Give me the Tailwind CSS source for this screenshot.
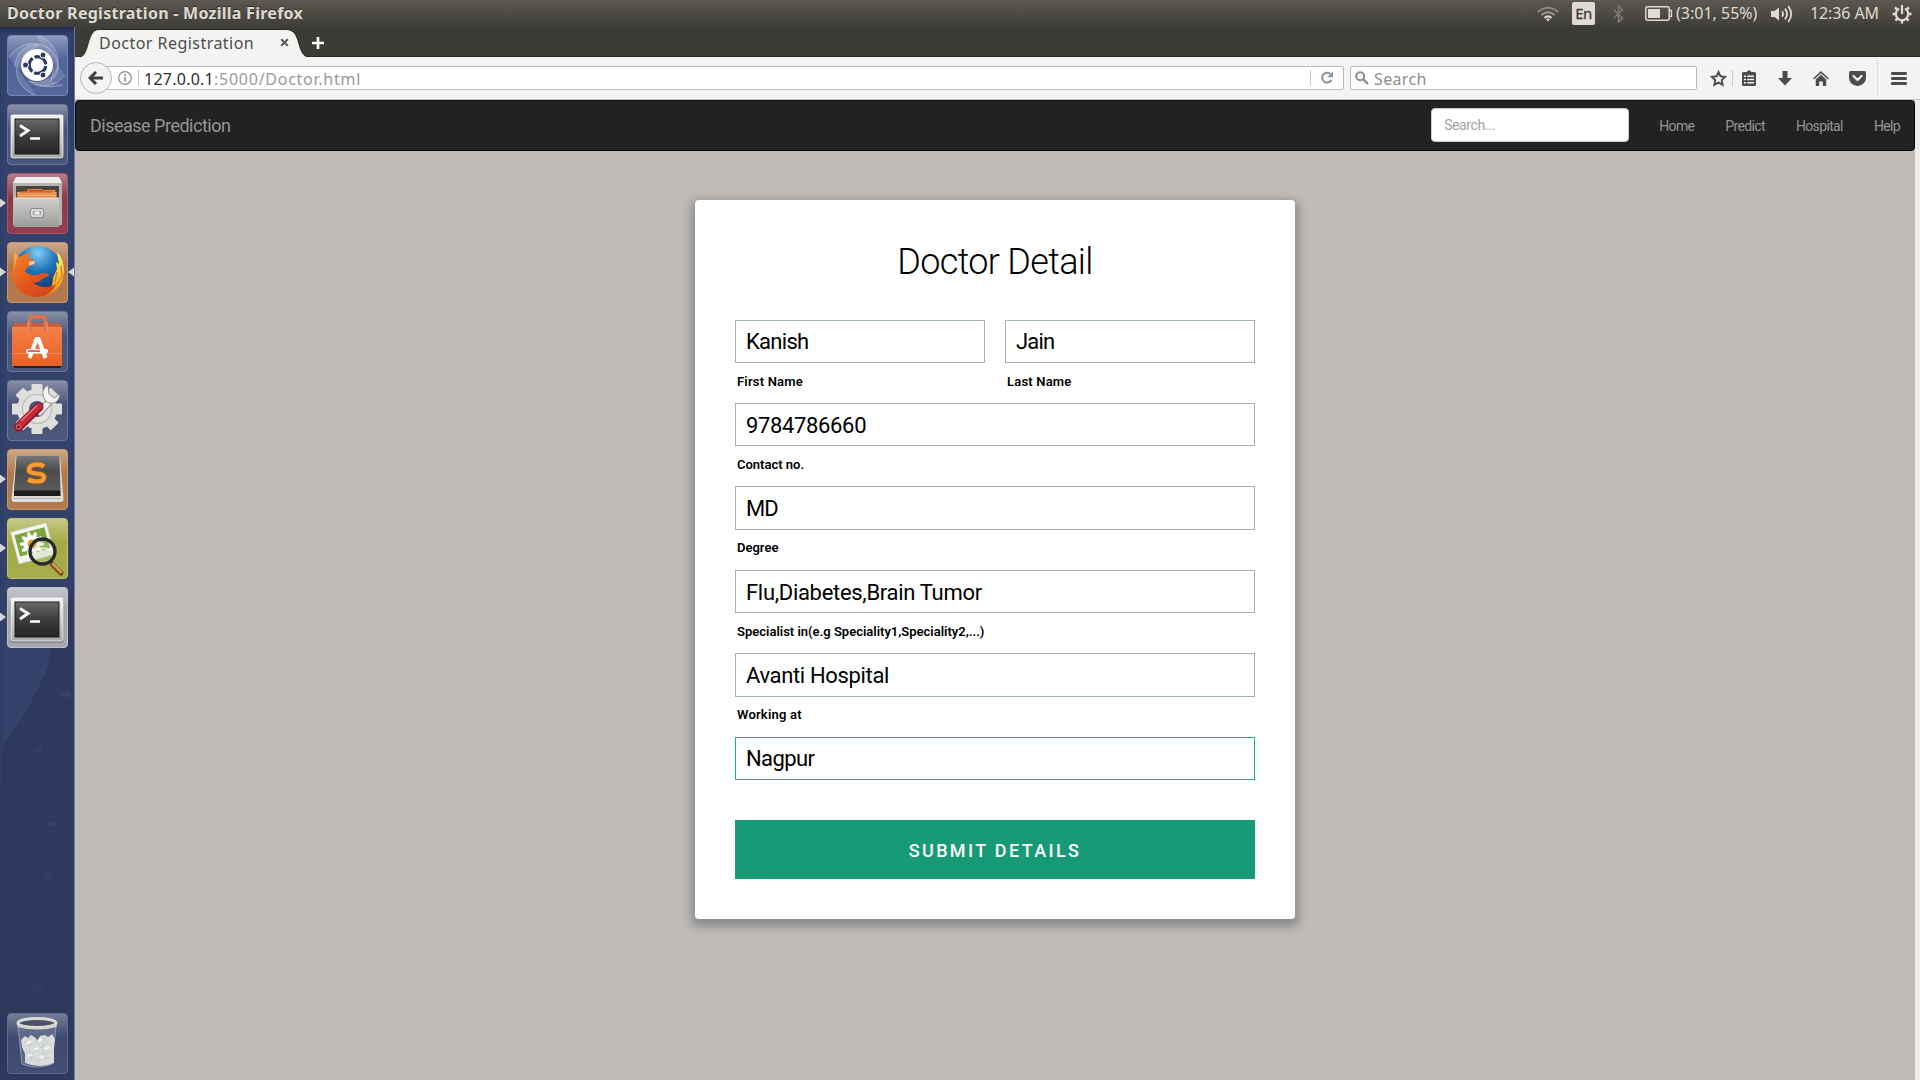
<!DOCTYPE html>
<html lang="en">
<head>
<meta charset="utf-8">
<title>Doctor Registration</title>
<script src="https://cdn.jsdelivr.net/npm/@tailwindcss/browser@4"></script>
</head>
<body class="w-[1920px] h-[1080px] overflow-hidden flex flex-col bg-[#c0bbb8] font-['Noto_Sans',sans-serif]">
<svg width="0" height="0" class="absolute">
  <defs>
    <linearGradient id="gloss" x1="0" y1="0" x2="0" y2="1"><stop offset="0" stop-color="#fff" stop-opacity=".4"/><stop offset=".4" stop-color="#fff" stop-opacity=".05"/><stop offset="1" stop-color="#fff" stop-opacity=".08"/></linearGradient>
    <linearGradient id="metal" x1="0" y1="0" x2="0" y2="1"><stop offset="0" stop-color="#f4f4f2"/><stop offset="1" stop-color="#a9a9a6"/></linearGradient>
    <linearGradient id="cabinet" x1="0" y1="0" x2="0" y2="1"><stop offset="0" stop-color="#cfcfcd"/><stop offset="1" stop-color="#9b9b99"/></linearGradient>
    <linearGradient id="screen" x1="0" y1="0" x2="0" y2="1"><stop offset="0" stop-color="#6a6a68"/><stop offset=".5" stop-color="#3c3c3b"/><stop offset="1" stop-color="#262625"/></linearGradient>
    <linearGradient id="key" x1="0" y1="0" x2="0" y2="1"><stop offset="0" stop-color="#77777a"/><stop offset=".4" stop-color="#4c4c4d"/><stop offset="1" stop-color="#5c5c5c"/></linearGradient>
    <linearGradient id="bag" x1="0" y1="0" x2="0" y2="1"><stop offset="0" stop-color="#f5814b"/><stop offset="1" stop-color="#ea6023"/></linearGradient>
    <radialGradient id="globe" cx=".5" cy=".15" r=".8"><stop offset="0" stop-color="#7fd0f2"/><stop offset=".45" stop-color="#2377bd"/><stop offset="1" stop-color="#0b2f6b"/></radialGradient>
    <linearGradient id="fox" x1="0" y1="0" x2="1" y2="1"><stop offset="0" stop-color="#f08a2c"/><stop offset=".5" stop-color="#e4571d"/><stop offset="1" stop-color="#d0401a"/></linearGradient>
    <linearGradient id="flame" x1="0" y1="0" x2="0" y2="1"><stop offset="0" stop-color="#fff27a"/><stop offset=".6" stop-color="#fbc52c"/><stop offset="1" stop-color="#ee7a1c"/></linearGradient>
    <symbol id="terminal" viewBox="0 0 61 61">
      <rect x="3.500" y="11.500" width="53" height="44" rx="2" fill="#000" opacity=".35"/>
      <rect x="4" y="11" width="52" height="43" rx="1.500" fill="url(#metal)" stroke="#f8f8f8" stroke-width=".8"/>
      <rect x="8" y="15" width="44" height="35" fill="url(#screen)" stroke="#1d1d1d"/>
      <path d="M13 21.500l8 5-8 5.500" fill="none" stroke="#fff" stroke-width="2.800"/>
      <path d="M23 34.500h10" stroke="#fff" stroke-width="2.600"/>
    </symbol>
  </defs>
</svg>

<!-- system panel -->
<header class="h-[27px] shrink-0 flex items-center justify-between pl-[7px] pr-2 bg-linear-to-b from-[#5c594e] to-[#3f3e39] text-[#dfdbd2]">
  <div class="pb-px text-base leading-[26px] font-bold tracking-[0.27px] whitespace-nowrap [text-shadow:0_-1px_0_#2b2a27]">Doctor Registration - Mozilla Firefox</div>
  <div class="flex items-center h-[27px] whitespace-nowrap">
    <svg class="w-[22px] h-4 mr-[13px]" viewBox="0 0 22 16" fill="none" stroke-width="2"><path d="M1 6Q11-2.500 21 6" stroke="#8d8a82"/><path d="M4.500 9Q11 3.500 17.500 9" stroke="#a09d95"/><path d="M7.500 12Q11 8.800 14.500 12" stroke="#dfdbd2"/><path d="M9 13.200L11 15.400 13 13.200Q11 11.800 9 13.200z" fill="#dfdbd2"/></svg>
    <div class="w-[23px] h-[23px] mr-[18px] rounded-[2px] bg-[#dfdbd2] text-[#3c3b37] text-[15px] leading-[23px] text-center tracking-[-0.5px] [-webkit-text-stroke:0.3px_#3c3b37]">En</div>
    <svg class="w-[11px] h-[18px] mr-[21px]" viewBox="0 0 11 18" fill="none" stroke="#7f7c75" stroke-width="1.500"><path d="M1 5l8.500 8-4 4V1l4 4L1 13"/></svg>
    <svg class="w-7 h-[15px] mr-[3px]" viewBox="0 0 28 15" fill="none"><rect x=".8" y=".8" width="23.400" height="13.400" rx="2" stroke="#dfdbd2" stroke-width="1.500"/><rect x="3" y="3" width="12" height="9" fill="#dfdbd2"/><path d="M25 4.500h1.500v6H25" stroke="#dfdbd2" stroke-width="1.300"/></svg>
    <div class="w-[95px] pb-px text-base leading-[26px]">(3:01, 55%)</div>
    <svg class="w-[22px] h-[18px] mr-[17px]" viewBox="0 0 22 18"><path d="M0 6h3.500L8 2.500v13L3.500 12H0z" fill="#dfdbd2"/><path d="M11 6.200q2.200 2.800 0 5.600M14 3.600q4 5.400 0 10.800M17.200 1q6 8 0 16" fill="none" stroke="#dfdbd2" stroke-width="1.800"/></svg>
    <div class="w-[82px] pb-px text-base leading-[26px] tracking-[-0.1px]">12:36 AM</div>
    <svg class="w-5 h-5" viewBox="0 0 20 20" fill="none" stroke="#dfdbd2"><path d="M7 4.600a6.200 6.200 0 1 0 6 0" stroke-width="2.200"/><path d="M10 1v9" stroke-width="2.200"/><path d="M10 16V19.500M.5 10h3.500M16 10h3.500M3 3.400l2.600 2.400M17 3.400l-2.600 2.400M3.400 16.600l2.400-2.400M16.600 16.600l-2.400-2.400" stroke-width="2.400"/></svg>
  </div>
</header>

<div class="flex flex-1 min-h-0">
  <!-- launcher -->
  <aside class="relative w-[75px] shrink-0 flex flex-col items-start gap-2 pt-2 pl-[7px] bg-[#32426b] border-r border-[#6e7ea3] shadow-[inset_0_6px_6px_-4px_#1b2340]">
    <svg class="absolute left-0 top-0 w-[74px] h-[1053px]" viewBox="0 0 74 1053" preserveAspectRatio="none"><path d="M74 560Q56 600 50 630C44 655 28 680 18 697 4 712 0 725 2 745L0 780V1053H74z" fill="#2f395e"/><g fill="#465579" opacity=".45"><ellipse cx="65" cy="667" rx="6" ry="3.500" opacity=".7"/><ellipse cx="42" cy="645" rx="6" ry="4" opacity=".4"/><ellipse cx="39" cy="722" rx="4" ry="4" opacity=".6"/><ellipse cx="51" cy="797" rx="5" ry="3" opacity=".6"/><ellipse cx="47" cy="849" rx="5" ry="4" opacity=".4"/><ellipse cx="38" cy="960" rx="6" ry="5" opacity=".3"/></g></svg>

    <div class="relative size-[61px] rounded-[4px] bg-[#475b95] border border-[#7485b4] overflow-hidden">
      <svg class="absolute -left-px -top-px size-[61px]" viewBox="0 0 61 61"><rect width="61" height="61" fill="url(#gloss)"/><g fill="#fff" fill-opacity=".13" stroke="#fff" stroke-opacity=".3" stroke-width="1"><path d="M2 22C14 4 40 4 49 22 54 32 50 42 43 46 52 30 38 14 26 16 14 18 8 30 10 40 12 52 22 58 30 61"/><path d="M28 0C42 3 52 14 51 30 49 44 32 50 22 46 34 56 50 50 58 40"/><path d="M8 32C8 18 20 8 32 10 22 14 14 22 16 34 18 46 34 56 56 50"/></g><circle cx="30" cy="31" r="16.500" fill="#000" opacity=".2"/><circle cx="30" cy="30" r="16" fill="#fff"/><circle cx="30.500" cy="30" r="8.300" fill="none" stroke="#2c3c66" stroke-width="3.200" stroke-dasharray="15.400 2" stroke-dashoffset="-1"/><g fill="#2c3c66" stroke="#fff" stroke-width="1"><circle cx="18.500" cy="30" r="3"/><circle cx="36" cy="20" r="3"/><circle cx="36" cy="40" r="3"/></g></svg>
    </div>
    <div class="relative size-[61px] rounded-[4px] bg-[#3d4a70] border border-[#68779d] overflow-hidden">
      <svg class="absolute -left-px -top-px size-[61px]" viewBox="0 0 61 61"><rect width="61" height="61" fill="url(#gloss)"/><use href="#terminal"/></svg>
    </div>
    <div class="relative size-[61px] rounded-[4px] bg-[#862f42] border border-[#a5566a] overflow-hidden">
      <svg class="absolute -left-px -top-px size-[61px]" viewBox="0 0 61 61"><rect width="61" height="61" fill="url(#gloss)"/><path d="M9 4h43l3 6v42H6V10z" fill="#b4b4b3"/><path d="M9 4h43l3 6H6z" fill="#ececea"/><rect x="9" y="13" width="43" height="14" fill="#4b4542"/><path d="M10 26V19l10-1 1-2h14l1 1h12l2 9z" fill="#e8843c"/><path d="M10 20h40M11 22.500h39" stroke="#f9c48a" stroke-width="1.200"/><path d="M22 17.500h14M13 19h33" stroke="#c44818" stroke-width="1"/><path d="M7 25h45v29H7z" fill="url(#cabinet)"/><path d="M7 25h45" stroke="#e4e4e4" stroke-width="1.200"/><rect x="23.500" y="35.500" width="13" height="9" rx="2.500" fill="#a8a8a8" stroke="#858585"/><rect x="24.800" y="36.800" width="10.400" height="6.400" rx="1.500" fill="none" stroke="#f5f5f5" stroke-width="1.300"/><rect x="27.500" y="38.500" width="5" height="3" fill="#eee"/></svg>
    </div>
    <div class="relative size-[61px] rounded-[4px] bg-[#ad6f41] border border-[#c79570] overflow-hidden">
      <svg class="absolute -left-px -top-px size-[61px]" viewBox="0 0 61 61"><rect width="61" height="61" fill="url(#gloss)"/><circle cx="31" cy="28" r="24" fill="url(#globe)"/><path d="M50 10C58 18 59 32 53 43 47 52 38 55 30 55 40 52 46 46 46 36L50 27 49 20 52 22z" fill="url(#flame)"/><path d="M54 24l1 10-5 9M50 30l-2 10" stroke="#e8781e" stroke-width="1.500" fill="none"/><path d="M8 10L11 15 17 13 24 10 22 16 28 19 28 22 22 24 18 29C20 32 26 34 31 33 34 31 38 30 42 33 40 36 36 35 34 38 31 41 28 41 26 40 30 45 40 47 49 42 46 50 39 55 30 55 16 55 5 45 5 30 5 24 8 21 7 16z" fill="url(#fox)"/><path d="M8 10L11 15C9 18 8 21 8 26 6 22 7 14 8 10z" fill="#f7a64a"/><path d="M22 19.500l6-.5-1 3-5 1.500z" fill="#f6d0b0"/></svg>
    </div>
    <div class="relative size-[61px] rounded-[4px] bg-[#3d4a70] border border-[#68779d] overflow-hidden">
      <svg class="absolute -left-px -top-px size-[61px]" viewBox="0 0 61 61"><rect width="61" height="61" fill="url(#gloss)"/><path d="M5 54h51l-3 3H8z" fill="#1a2038"/><path d="M5 16l3-4h44l3 4z" fill="#c65f3c"/><path d="M5 16h50v39H5z" fill="url(#bag)"/><path d="M22.500 20V9q0-3 3-3h10q3 0 3 3v11" fill="none" stroke="#dd7350" stroke-width="3.400"/><path d="M21 20V11M40 20V11" stroke="#f3a385" stroke-width=".8"/><path d="M5 42.500h50" stroke="#f08b56" stroke-width="1"/><path d="M22.500 47L29.500 28h2L38.500 47" fill="none" stroke="#fff" stroke-width="4"/><rect x="19" y="38" width="22" height="4.500" rx="2" fill="#fff"/><path d="M21 40.200h12" stroke="#e55" stroke-width="1.800"/></svg>
    </div>
    <div class="relative size-[61px] rounded-[4px] bg-[#3d4a70] border border-[#68779d] overflow-hidden">
      <svg class="absolute -left-px -top-px size-[61px]" viewBox="0 0 61 61"><rect width="61" height="61" fill="url(#gloss)"/><g transform="translate(30 29)"><g fill="#dededc"><rect x="-5.500" y="-25" width="11" height="50" rx="1"/><rect x="-5.500" y="-25" width="11" height="50" rx="1" transform="rotate(45)"/><rect x="-5.500" y="-25" width="11" height="50" rx="1" transform="rotate(90)"/><rect x="-5.500" y="-25" width="11" height="50" rx="1" transform="rotate(135)"/><circle r="20"/></g><circle r="14.500" fill="#e3e3e1" stroke="#bcbcbb" stroke-width="1.200"/><circle r="8" fill="#46537a"/></g><path d="M31 34L45 19" stroke="#8f8f8f" stroke-width="7"/><path d="M31 34L46 18" stroke="#f1f1f1" stroke-width="5"/><path d="M41 5c-6 3-7 12-1 17 5 3 12 1 13-8l-6 4-5-4z" fill="#f3f3f3" stroke="#8c8c8c" stroke-width="1"/><path d="M11.500 47L32 27" stroke="#8f1620" stroke-width="9" stroke-linecap="round"/><path d="M11.500 46.500L32 26.500" stroke="#c22a35" stroke-width="6.500" stroke-linecap="round"/><path d="M14 41L30 25.500" stroke="#ef7a7e" stroke-width="1.300"/><circle cx="11.500" cy="47" r="2" fill="#5a1118" stroke="#e99" stroke-width=".8"/></svg>
    </div>
    <div class="relative size-[61px] rounded-[4px] bg-[#ac713f] border border-[#c6956c] overflow-hidden">
      <svg class="absolute -left-px -top-px size-[61px]" viewBox="0 0 61 61"><rect width="61" height="61" fill="url(#gloss)"/><path d="M9 7h44l3.500 43q0 3-3 3H7.500q-3 0-3-3z" fill="#dcdcdb"/><path d="M9.500 7h43l1 33q0 3-3 3H10q-3 0-3-3z" fill="url(#key)"/><path d="M7 41.500h46.500v5.500H7z" fill="#1c1c1c"/><path d="M6.500 49.500h48" stroke="#8b8b8b" stroke-width="1" stroke-dasharray="1 1"/><path d="M37 17.500C33 14.500 23 14.500 22 20 21 27 37 22 37 28.500 36 34 26 33 21 30.500" fill="none" stroke="#c96a1b" stroke-width="6.500" opacity=".35"/><path d="M37 17.500C33 14.500 23 14.500 22 20 21 27 37 22 37 28.500 36 34 26 33 21 30.500" fill="none" stroke="#fb9a2e" stroke-width="4.200"/></svg>
    </div>
    <div class="relative size-[61px] rounded-[4px] bg-[#a0a63c] border border-[#bcc272] overflow-hidden">
      <svg class="absolute -left-px -top-px size-[61px]" viewBox="0 0 61 61"><rect width="61" height="61" fill="url(#gloss)"/><g transform="rotate(-15 25 25)"><rect x="7" y="9" width="37" height="33" fill="#f4f4f2" stroke="#c8c8c0" stroke-width=".6"/><rect x="10" y="13" width="31" height="22" fill="#7aa63c"/></g><g transform="translate(25 26)" fill="#fff"><ellipse rx="12.500" ry="3"/><ellipse rx="12.500" ry="3" transform="rotate(36)"/><ellipse rx="12.500" ry="3" transform="rotate(72)"/><ellipse rx="12.500" ry="3" transform="rotate(108)"/><ellipse rx="12.500" ry="3" transform="rotate(144)"/><circle r="4.500" fill="#ee9a1e"/></g><path d="M45 46l9 9" stroke="#6f4a1d" stroke-width="5" stroke-linecap="round"/><path d="M46 46l8 8" stroke="#d59a4e" stroke-width="2.500" stroke-linecap="round"/><circle cx="35.500" cy="33.500" r="12.500" fill="#b9cf98" fill-opacity=".35" stroke="#26282b" stroke-width="3.400"/><path d="M26 33q9-5 19-1" stroke="#fff" stroke-width="2" fill="none" opacity=".7"/></svg>
    </div>
    <div class="relative size-[61px] rounded-[4px] bg-[#9fa1a8] border border-[#c1c2c7] overflow-hidden">
      <svg class="absolute -left-px -top-px size-[61px]" viewBox="0 0 61 61"><rect width="61" height="61" fill="url(#gloss)"/><use href="#terminal"/></svg>
    </div>
    <div class="relative size-[61px] mt-auto mb-[6px] rounded-[4px] bg-[#36426a] border border-[#5c6a92] overflow-hidden">
      <svg class="absolute -left-px -top-px size-[61px]" viewBox="0 0 61 61"><rect width="61" height="61" fill="url(#gloss)" opacity=".8"/><path d="M11 13L15 51q15 6 30 0L49 13z" fill="#8b97b4" fill-opacity=".35" stroke="#aab3c8" stroke-width=".7"/><path d="M14 27l4-4 3 2 3-3 5 3 1 3 3-5 5-1 3 2 4-3 3 5-1 8 0 16q-14 6-29 0l0-9-3-7z" fill="#d9dcdb"/><path d="M17 28l6 5 6-4 5 6 6-5 5 3M17 38l7 3 6-4 6 5 7-4M19 47l6-3 6 4 6-4 6 2M24 24l-2 12 3 12M38 23l-3 12 4 12" stroke="#c5caca" stroke-width="1" fill="none"/><path d="M20 31l4-3M31 28l4-2M27 37l4-2M38 36l4-2M21 43l4-2M33 45l4-2" stroke="#f4f5f5" stroke-width="2.500"/><ellipse cx="30" cy="10" rx="19" ry="4.500" fill="#4a516a" stroke="#dcdcd6" stroke-width="3"/><path d="M10.500 11.500q19.500 6.500 39 0v2.500q-19.500 5-39 0z" fill="#d3d3cc"/></svg>
    </div>

    <!-- running / focused marks -->
    <svg class="absolute left-0 top-0 w-[74px] h-[700px]" viewBox="0 0 74 700" fill="#d8d8d8"><path d="M0 171.500l6 4.500-6 4.500zM0 240.500l6 4.500-6 4.500zM0 447.500l6 4.500-6 4.500zM0 516.500l6 4.500-6 4.500zM0 585.500l6 4.500-6 4.500zM74 240.500l-6 4.500 6 4.500z"/></svg>
  </aside>

  <main class="flex-1 flex flex-col min-w-0">
    <!-- tab strip -->
    <div class="relative h-[30px] shrink-0 bg-[#3c3b37] border-b border-[#2a2926]">
      <svg class="absolute left-0 top-0 w-[240px] h-[31px]" viewBox="0 0 240 31"><path d="M0 30.500H4C15 29.500 11 2.500 24 2.500H211C228 2.500 220 29.500 235 30.500V31H0z" fill="#f4f3f2" stroke="#2a2926" stroke-width="1"/><path d="M0 30h240v1H0z" fill="#f4f3f2"/></svg>
      <div class="relative flex items-center h-[31px] pl-[24px]">
        <span class="w-[181px] text-[16px] leading-[30px] tracking-[0.46px] text-[#4c4c4c] whitespace-nowrap">Doctor Registration</span>
        <svg class="size-[9px]" viewBox="0 0 9 9"><path d="M1.200 1.200l6.600 6.600M7.800 1.200L1.200 7.800" stroke="#5b5b5b" stroke-width="2.100"/></svg>
        <svg class="size-[14px] ml-[22px]" viewBox="0 0 14 14"><path d="M7 1v12M1 7h12" stroke="#fff" stroke-width="2.600"/></svg>
      </div>
    </div>

    <!-- navigation toolbar -->
    <div class="relative h-[43px] shrink-0 flex items-center bg-[#f4f3f2] border-b border-[#c5c3c0] pl-[5px] pb-px">
      <div class="relative z-10 size-8 rounded-full border border-[#b9b7b5] bg-[#f4f3f2] flex items-center justify-center">
        <svg class="w-[15px] h-[14px] mr-px" viewBox="0 0 15 14"><path d="M8 1L2 7l6 6M2.500 7H15" fill="none" stroke="#3f3f3f" stroke-width="3"/></svg>
      </div>
      <div class="-ml-[8px] w-[1240px] h-6 flex items-center bg-white border border-[#bdbbb8] rounded-r-[2px] pl-[13px]">
        <svg class="size-[14px]" viewBox="0 0 14 14" fill="none" stroke="#8c8c8c"><circle cx="7" cy="7" r="6.300" stroke-width="1.200"/><path d="M7 6.200v4.300M7 3.300v1.600" stroke-width="1.700"/></svg>
        <div class="w-px h-4 ml-[6px] bg-[#c9c9c9]"></div>
        <div class="ml-[5px] pt-[2px] text-base leading-[22px] whitespace-nowrap text-[#9a9a9a]"><span class="text-[#2e2e2e] tracking-[0.25px]">127.0.0.1</span><span class="tracking-[0.74px]">:5000/Doctor.html</span></div>
        <div class="w-px h-4 ml-auto mr-[10px] bg-[#c9c9c9]"></div>
        <svg class="size-[13px] mr-[9px]" viewBox="0 0 13 13"><path d="M9.300 2.900A4.900 4.900 0 1 0 10.500 8.800" fill="none" stroke="#8a97a3" stroke-width="2.100"/><path d="M12 .3v6H6.200z" fill="#8a97a3"/></svg>
      </div>
      <div class="ml-[6px] w-[347px] h-6 flex items-center bg-white border border-[#bdbbb8] rounded-[2px] pl-[4px]">
        <svg class="size-[14px]" viewBox="0 0 14 14"><circle cx="5.200" cy="5.200" r="4" fill="none" stroke="#8c8c8c" stroke-width="2"/><path d="M8 8l5 5" stroke="#8c8c8c" stroke-width="2.400"/></svg>
        <span class="ml-[5px] pt-[2px] text-base leading-[22px] tracking-[0.35px] text-[#8e8e8e]">Search</span>
      </div>
      <div class="flex items-center pt-px text-[#4c4c4c]">
        <svg class="ml-[13px] size-[17px]" viewBox="0 0 17 17"><path d="M8.500 2l2 4.300 4.700.6-3.500 3.200.9 4.700-4.100-2.300-4.100 2.300.9-4.700L1.800 6.900l4.700-.6z" fill="none" stroke="currentColor" stroke-width="1.900"/></svg>
        <div class="ml-[5px] w-px h-4 bg-[#c9c9c9]"></div>
        <svg class="ml-[9px] w-[14px] h-4" viewBox="0 0 14 16"><path fill="currentColor" fill-rule="evenodd" d="M4.500 2L7 0l2.500 2H12.500q1.500 0 1.500 1.500v11q0 1.500-1.500 1.500h-11Q0 16 0 14.500v-11Q0 2 1.500 2zM2 5.500v1.600h2V5.500zm3.200 0v1.600H12V5.500zM2 8.700v1.600h2V8.700zm3.200 0v1.600H12V8.700zM2 11.900v1.600h2v-1.600zm3.200 0v1.600H12v-1.600z"/></svg>
        <svg class="ml-[22px] w-[14px] h-[15px]" viewBox="0 0 14 15"><path d="M4.500 0h5v7H14L7 14.500 0 7h4.500z" fill="currentColor"/></svg>
        <svg class="ml-[21px] w-4 h-[15px]" viewBox="0 0 16 15"><path d="M.6 8L8 1.200 15.400 8" fill="none" stroke="currentColor" stroke-width="1.600"/><path d="M2.800 8.500L8 3.800l5.200 4.700V15H9.800v-4.500H6.200V15H2.800z" fill="currentColor"/></svg>
        <svg class="ml-[20px] w-[17px] h-[15px]" viewBox="0 0 17 15"><path d="M1.500 0h14Q17 0 17 1.500V6.500a8.500 8.500 0 0 1-17 0V1.500Q0 0 1.500 0z" fill="currentColor"/><path d="M4.500 5l4 4 4-4" fill="none" stroke="#f4f3f2" stroke-width="2.200" stroke-linecap="round" stroke-linejoin="round"/></svg>
        <div class="ml-[11px] w-px h-9 bg-[#dddbd9]"></div>
        <svg class="ml-[13px] w-4 h-[13px]" viewBox="0 0 16 13"><path d="M1.300 1.500h13.400M1.300 6.500h13.400M1.300 11.500h13.400" stroke="currentColor" stroke-width="2.800" stroke-linecap="round"/></svg>
      </div>
    </div>

    <!-- page -->
    <div class="flex-1 flex min-h-0">
      <div class="flex-1 flex flex-col items-center bg-[#c0bbb8] font-[Roboto,sans-serif]">
        <nav class="w-full h-[51px] shrink-0 flex items-center bg-[#222] border border-[#080808] rounded-[4px] pl-[14px] pr-[14px] pb-px text-[#959595]">
          <a class="pt-px text-[18px] leading-5 tracking-[-0.5px]">Disease Prediction</a>
          <input type="text" placeholder="Search..." class="ml-auto w-[198px] h-[34px] px-3 rounded-[4px] border border-[#ccc] bg-white text-sm tracking-[-0.4px] placeholder:text-[#a3a3a3]">
          <div class="flex items-center gap-[31px] ml-[30px] pt-[2px] text-sm tracking-[-0.64px]"><a>Home</a><a>Predict</a><a>Hospital</a><a>Help</a></div>
        </nav>
        <form class="mt-[49px] w-[600px] h-[719px] p-10 bg-white rounded-[4px] shadow-[0_4px_10px_4px_rgba(19,35,47,0.3)] text-black">
          <h1 class="h-[79.55px] pt-px text-center text-[36px] leading-[42px] font-light tracking-[-0.65px]">Doctor Detail</h1>
          <div class="flex gap-5">
            <div class="w-[250px]">
              <input type="text" value="Kanish" class="block w-full h-[43.4px] px-[10px] pt-px border border-[#a0b3b0] text-[22px] tracking-[-0.7px]">
              <label class="block h-[40px] pt-[9px] pl-[2px] text-[13px] leading-5 font-semibold tracking-[0.2px]">First Name</label>
            </div>
            <div class="w-[250px]">
              <input type="text" value="Jain" class="block w-full h-[43.4px] px-[10px] pt-px border border-[#a0b3b0] text-[22px] tracking-[-0.8px]">
              <label class="block h-[40px] pt-[9px] pl-[2px] text-[13px] leading-5 font-semibold tracking-[0.2px]">Last Name</label>
            </div>
          </div>
          <input type="text" value="9784786660" class="block w-full h-[43.4px] px-[10px] pt-[2px] border border-[#a0b3b0] text-[22px] tracking-[-0.35px]">
          <label class="block h-[40px] pt-[9px] pl-[2px] text-[13px] leading-5 font-semibold">Contact no.</label>
          <input type="text" value="MD" class="block w-full h-[43.4px] px-[10px] pt-px border border-[#a0b3b0] text-[22px] tracking-[-1px]">
          <label class="block h-[40px] pt-[8px] pl-[2px] text-[13px] leading-5 font-semibold">Degree</label>
          <input type="text" value="Flu,Diabetes,Brain Tumor" class="block w-full h-[43.4px] px-[10px] pt-[2px] border border-[#a0b3b0] text-[22px] tracking-[-0.3px]">
          <label class="block h-[40px] pt-[9px] pl-[2px] text-[13px] leading-5 font-semibold">Specialist in(e.g Speciality1,Speciality2,...)</label>
          <input type="text" value="Avanti Hospital" class="block w-full h-[43.4px] px-[10px] pt-[2px] border border-[#a0b3b0] text-[22px] tracking-[-0.35px]">
          <label class="block h-[40px] pt-[8px] pl-[2px] text-[13px] leading-5 font-semibold tracking-[0.2px]">Working at</label>
          <input type="text" value="Nagpur" class="block w-full h-[43.4px] px-[10px] pt-px border border-[#1ab188] text-[22px] tracking-[-0.6px]">
          <button type="button" class="block mt-10 w-full h-[59px] pt-[2px] bg-[#179b77] text-white text-[18px] font-medium tracking-[2.35px]">SUBMIT DETAILS</button>
        </form>
      </div>
      <div class="w-[5px] shrink-0 bg-[#efedeb]"></div>
    </div>
  </main>
</div>
</body>
</html>
